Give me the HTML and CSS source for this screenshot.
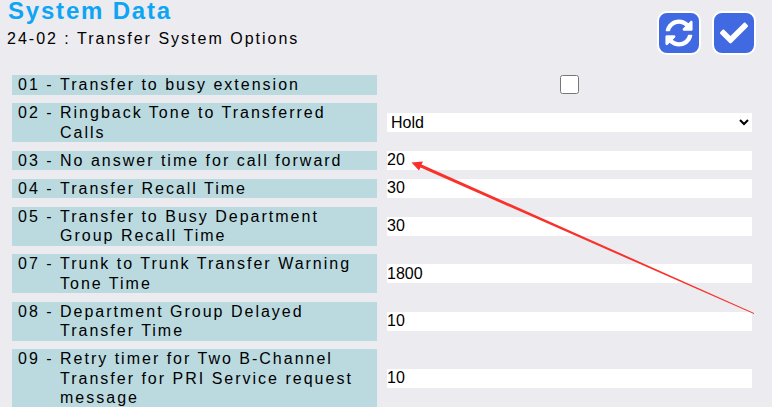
FILE: index.html
```html
<!DOCTYPE html>
<html lang="en">
<head>
    <meta charset="UTF-8">
    <meta name="viewport" content="width=device-width, initial-scale=1.0">
    <title>System Data</title>
    <link rel="stylesheet" href="styles.css">
</head>
<body>
    <div class="header">
        <div class="titles">
            <h1>System Data</h1>
            <h2>24-02 : Transfer System Options</h2>
        </div>
        <div class="actions">
            <button class="icon-btn" title="Refresh">
                <svg viewBox="0 0 512 512" width="28" height="28"><path fill="#fff" d="M370.72 133.28C339.458 104.008 298.888 87.962 255.848 88c-77.458.068-144.328 53.178-162.791 126.85-1.344 5.363-6.122 9.15-11.651 9.15H24.103c-7.498 0-13.194-6.807-11.807-14.176C33.933 94.924 134.813 8 256 8c66.448 0 126.791 26.136 171.315 68.685L463.03 40.97C478.149 25.851 504 36.559 504 57.941V192c0 13.255-10.745 24-24 24H345.941c-21.382 0-32.09-25.851-16.971-40.971l41.75-41.749zM32 296h134.059c21.382 0 32.09 25.851 16.971 40.971l-41.75 41.75c31.262 29.273 71.835 45.319 114.876 45.28 77.418-.07 144.315-53.144 162.787-126.849 1.344-5.363 6.122-9.15 11.651-9.15h57.304c7.498 0 13.194 6.807 11.807 14.176C478.067 417.076 377.187 504 256 504c-66.448 0-126.791-26.136-171.315-68.685L48.97 471.03C33.851 486.149 8 475.441 8 454.059V320c0-13.255 10.745-24 24-24z"/></svg>
            </button>
            <button class="icon-btn" title="Save">
                <svg viewBox="0 0 512 512" width="28" height="28"><path fill="#fff" d="M173.898 439.404l-166.4-166.4c-9.997-9.997-9.997-26.206 0-36.204l36.203-36.204c9.997-9.998 26.207-9.998 36.204 0L192 312.69 432.095 72.596c9.997-9.997 26.207-9.997 36.204 0l36.203 36.204c9.997 9.997 9.997 26.206 0 36.204l-294.4 294.401c-9.998 9.997-26.207 9.997-36.204-.001z"/></svg>
            </button>
        </div>
    </div>

    <div class="rows">
        <div class="row">
            <div class="label"><span class="num">01 -</span><span>Transfer to busy extension</span></div>
            <div class="field center"><input type="checkbox" class="check"></div>
        </div>
        <div class="row">
            <div class="label"><span class="num">02 -</span><span>Ringback Tone to Transferred Calls</span></div>
            <div class="field"><select class="select"><option>Hold</option></select></div>
        </div>
        <div class="row">
            <div class="label"><span class="num">03 -</span><span>No answer time for call forward</span></div>
            <div class="field"><input type="text" class="text" value="20"></div>
        </div>
        <div class="row">
            <div class="label"><span class="num">04 -</span><span>Transfer Recall Time</span></div>
            <div class="field"><input type="text" class="text" value="30"></div>
        </div>
        <div class="row">
            <div class="label"><span class="num">05 -</span><span>Transfer to Busy Department Group Recall Time</span></div>
            <div class="field"><input type="text" class="text" value="30"></div>
        </div>
        <div class="row">
            <div class="label"><span class="num">07 -</span><span>Trunk to Trunk Transfer Warning Tone Time</span></div>
            <div class="field"><input type="text" class="text" value="1800"></div>
        </div>
        <div class="row">
            <div class="label"><span class="num">08 -</span><span>Department Group Delayed Transfer Time</span></div>
            <div class="field"><input type="text" class="text" value="10"></div>
        </div>
        <div class="row">
            <div class="label"><span class="num">09 -</span><span>Retry timer for Two B-Channel Transfer for PRI Service request message</span></div>
            <div class="field"><input type="text" class="text" value="10"></div>
        </div>
    </div>

    <!-- annotation drawn over the form -->
    <svg class="arrow" width="772" height="407" viewBox="0 0 772 407">
        <polygon fill="#f9312a" points="754,312.9 754,314.1 420.5,167.6 419,170.5 411.5,162.5 423,161.5 421.5,164.4"/>
    </svg>
</body>
</html>
```

FILE: styles.css
```css
html, body {
    height: 100%;
    overflow: hidden;
}
body {
    margin: 0;
    background: #ecebf0;
    font-family: "Liberation Sans", Arial, sans-serif;
    color: #000;
}
.header {
    display: flex;
    justify-content: space-between;
    height: 75px;
}
h1 {
    margin: 0;
    padding: 0 0 0 8px;
    font-size: 24px;
    line-height: 22px;
    letter-spacing: 1.8px;
    color: #0ea5f5;
}
h2 {
    margin: 0;
    padding: 7px 0 0 7px;
    font-size: 16px;
    line-height: 20px;
    font-weight: normal;
    letter-spacing: 2px;
}
.actions {
    display: flex;
    gap: 11px;
    padding: 11px 16px 0 0;
}
.icon-btn {
    display: flex;
    align-items: center;
    justify-content: center;
    width: 44px;
    height: 44px;
    padding: 0;
    background: #4169e1;
    border: 2px solid #fff;
    border-radius: 10px;
}
.row {
    display: flex;
    align-items: center;
    margin: 0 0 8.5px 12px;
}
.label {
    display: flex;
    box-sizing: border-box;
    width: 365px;
    padding: 0 6px;
    background: #bbdae0;
    font-size: 16px;
    line-height: 19.5px;
    letter-spacing: 2px;
}
.num {
    flex: none;
    width: 42px;
}
.field {
    width: 365px;
    margin-left: 10px;
}
.center {
    display: flex;
    justify-content: center;
}
.check {
    width: 19px;
    height: 19px;
    margin: 0;
    display: block;
}
.text, .select {
    display: block;
    box-sizing: border-box;
    width: 100%;
    height: 19px;
    padding: 0;
    border: 0;
    background: #fff;
    font-family: "Liberation Sans", Arial, sans-serif;
    font-size: 16px;
    color: #000;
}
.arrow {
    position: absolute;
    top: 0;
    left: 0;
}
```
